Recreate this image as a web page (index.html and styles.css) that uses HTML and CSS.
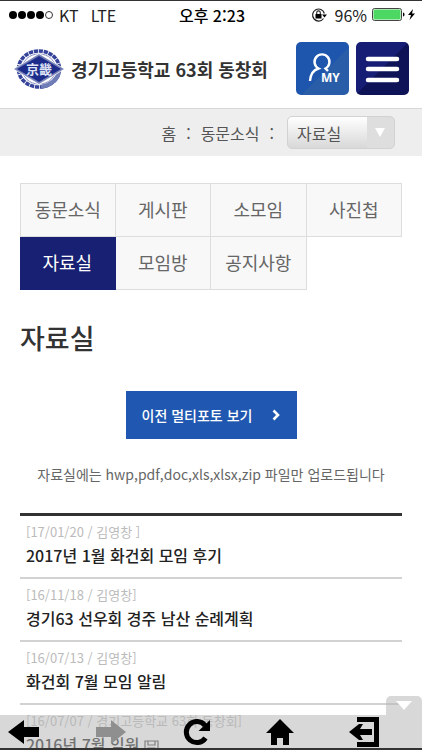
FILE: index.html
```html
<!DOCTYPE html>
<html lang="ko">
<head>
  <meta charset="UTF-8">
  <meta name="viewport" content="width=device-width, initial-scale=1.0">
  <title>경기고등학교 63회 동창회</title>
  <link rel="stylesheet" href="styles.css">
</head>
<body>
  <div class="app">
    <div class="status">
      <div class="status-left">
        <svg width="47" height="10" viewBox="0 0 47 10">
          <circle cx="5" cy="5" r="4"/><circle cx="14" cy="5" r="4"/><circle cx="23" cy="5" r="4"/><circle cx="32" cy="5" r="4"/>
          <circle cx="41" cy="5" r="3.5" fill="none" stroke="#333" stroke-width="1"/>
        </svg>
        <span>KT</span>
        <span class="net">LTE</span>
      </div>
      <div class="status-time">오후 2:23</div>
      <div class="status-right">
        <svg width="16" height="16" viewBox="0 0 16 16">
          <path d="M12.5 11.5A6 6 0 1 1 13.4 6.5" fill="none" stroke="#222" stroke-width="1.2"/>
          <path d="M11 7.5h5l-2.5 3z"/>
          <rect x="4.5" y="7" width="6" height="4.5"/>
          <path d="M5.7 7V5.7a1.8 1.8 0 0 1 3.6 0V7" fill="none" stroke="#222" stroke-width="1.1"/>
        </svg>
        <span>96%</span>
        <svg width="44" height="14" viewBox="0 0 44 14">
          <rect x="0.5" y="0.5" width="29" height="12" rx="2" fill="#fff" stroke="#444"/>
          <rect x="1.5" y="1.5" width="27" height="10" rx="1" fill="#4cd863"/>
          <path d="M31 4.5c2 .4 2 3.6 0 4z"/>
          <path d="M41 1l-5 6h3l-1.5 5 5.5-6.5h-3z"/>
        </svg>
      </div>
    </div>

    <header class="header">
      <a href="#" class="brand">
        <svg class="emblem" width="52" height="42" viewBox="0 0 52 42">
          <ellipse cx="26" cy="21" rx="20.5" ry="18" fill="none" stroke="#35439a" stroke-width="3.6" stroke-dasharray="4.2 0.8"/>
          <ellipse cx="26" cy="21" rx="17" ry="15" fill="#fff" stroke="#8791c0" stroke-width="1"/>
          <path d="M28 39Q43 36 46 24" fill="none" stroke="#6f7cb6" stroke-width="4"/>
          <path d="M0 21L26 5 52 21 26 37z" fill="#fff"/>
          <path d="M1 21L26 6 51 21 26 36z" fill="#7a84b8"/>
          <path d="M4 21L26 8 48 21 26 34z" fill="#1d2c8a"/>
          <text x="26" y="26" text-anchor="middle" class="emblem-text">京畿</text>
        </svg>
        <span>경기고등학교 63회 동창회</span>
      </a>
      <div class="header-buttons">
        <button type="button" class="icon-button my" aria-label="MY">
          <svg width="53" height="53" viewBox="0 0 53 53">
            <path d="M14 39C14.5 32 17.5 28 22.5 26.5A7.5 7.5 0 1 1 29.5 26.5L32 29" fill="none" stroke="#fff" stroke-width="2.4"/>
            <text x="25" y="40" class="my-text">MY</text>
          </svg>
        </button>
        <button type="button" class="icon-button menu" aria-label="메뉴">
          <svg width="53" height="53" viewBox="0 0 53 53">
            <path d="M12 17h29M12 27h29M12 38h29" stroke="#fff" stroke-width="4.5" stroke-linecap="round"/>
          </svg>
        </button>
      </div>
    </header>

    <nav class="breadcrumb">
      <a href="#">홈</a>
      <span>:</span>
      <a href="#">동문소식</a>
      <span>:</span>
      <div class="select-box">
        <select aria-label="게시판 선택">
          <option>자료실</option>
        </select>
        <svg class="select-arrow" width="12" height="9" viewBox="0 0 12 9"><path d="M1 0h10L6 9z" fill="#fff"/></svg>
      </div>
    </nav>

    <main class="content">
      <nav class="tabs">
        <a href="#">동문소식</a>
        <a href="#">게시판</a>
        <a href="#">소모임</a>
        <a href="#">사진첩</a>
        <a href="#" class="active">자료실</a>
        <a href="#">모임방</a>
        <a href="#">공지사항</a>
      </nav>

      <h1>자료실</h1>

      <button type="button" class="old-photos">
        <span>이전 멀티포토 보기</span>
        <svg width="8" height="12" viewBox="0 0 8 12"><path d="M1.5 1.5L6 6 1.5 10.5" fill="none" stroke="#fff" stroke-width="2.6"/></svg>
      </button>
      <p class="notice">자료실에는 hwp,pdf,doc,xls,xlsx,zip 파일만 업로드됩니다</p>

      <ul class="posts">
        <li>
          <span class="meta">[17/01/20 / 김영창 ]</span>
          <a href="#">2017년 1월 화건회 모임 후기</a>
        </li>
        <li>
          <span class="meta">[16/11/18 / 김영창]</span>
          <a href="#">경기63 선우회 경주 남산 순례계획</a>
        </li>
        <li>
          <span class="meta">[16/07/13 / 김영창]</span>
          <a href="#">화건회 7월 모임 알림</a>
        </li>
        <li>
          <span class="meta">[16/07/07 / 경기고등학교 63회 동창회]</span>
          <a href="#">2016년 7월 임원
            <svg width="15" height="13" viewBox="0 0 15 13"><path d="M1 1h13v11H1zM4 1v4h7V1M4 12V8h7v4" fill="none" stroke="#444" stroke-width="1.2"/></svg>
          </a>
        </li>
      </ul>
    </main>
  </div>

  <div class="toolbar">
    <button type="button" class="collapse" aria-label="접기">
      <svg width="16" height="9" viewBox="0 0 16 9"><path d="M0 0h16L8 9z" fill="#fff"/></svg>
    </button>
    <div class="toolbar-row">
      <button type="button" aria-label="뒤로">
        <svg width="32" height="24" viewBox="0 0 32 24"><path d="M0 12L16 0v7h15v10H16v7z"/></svg>
      </button>
      <button type="button" aria-label="앞으로" disabled>
        <svg width="32" height="24" viewBox="0 0 32 24"><path d="M31 12L16 0v7H1v10h15v7z" fill="#8f8f8f"/></svg>
      </button>
      <button type="button" aria-label="새로고침">
        <svg width="30" height="28" viewBox="0 0 30 28">
          <path d="M23.5 20A10.5 10.5 0 1 1 23 7.5" fill="none" stroke="#000" stroke-width="5"/>
          <path d="M28 2v11H16.5z"/>
        </svg>
      </button>
      <button type="button" aria-label="홈">
        <svg width="28" height="26" viewBox="0 0 28 26"><path d="M14 0L0 14h5v12h6v-7h6v7h6V14h5L23.5 9.5z"/></svg>
      </button>
      <button type="button" aria-label="나가기">
        <svg width="30" height="30" viewBox="0 0 30 30">
          <path d="M8 2.5h19.5v25H8" fill="none" stroke="#000" stroke-width="5"/>
          <path d="M0 15L10 7h4l-3 5h12v6H11l3 5h-4z"/>
        </svg>
      </button>
    </div>
  </div>
</body>
</html>
```

FILE: styles.css
```css
* {
  box-sizing: border-box;
}
body {
  margin: 0;
  background: #fff;
  color: #333;
  font-family: "Noto Sans CJK KR", sans-serif;
}
a {
  color: inherit;
  text-decoration: none;
}
button {
  padding: 0;
  border: none;
  background: none;
  font-family: inherit;
  cursor: pointer;
}
svg {
  display: block;
  flex-shrink: 0;
}
.app {
  height: 100vh;
  overflow: hidden;
  border-top: 1px solid #333;
}

/* status bar */
.status {
  display: grid;
  grid-template-columns: 1fr auto 1fr;
  align-items: center;
  height: 28px;
  padding: 0 6px 0 8px;
  color: #222;
  font-size: 16px;
  line-height: 28px;
}
.status-left, .status-right {
  display: flex;
  align-items: center;
  gap: 4px;
}
.net {
  margin-left: 8px;
}
.status-time {
  font-weight: 500;
  color: #000;
}
.status-right {
  justify-content: flex-end;
  gap: 5px;
}
.status-right span {
  margin-left: 3px;
}

/* header */
.header {
  display: flex;
  justify-content: space-between;
  align-items: center;
  height: 80px;
  padding: 0 13px;
  border-bottom: 1px solid #d8d8d8;
}
.brand {
  display: flex;
  align-items: center;
  gap: 6px;
  font-size: 18px;
  font-weight: bold;
  line-height: 24px;
  white-space: nowrap;
}
.emblem-text {
  font-size: 13px;
  font-weight: bold;
  fill: #dfe3f5;
}
.header-buttons {
  display: flex;
  gap: 7px;
}
.icon-button {
  border-radius: 5px;
}
.my {
  background: linear-gradient(135deg, #1e56ae 55%, #2a5da8 55%);
}
.my-text {
  font-family: "Open Sans", sans-serif;
  font-size: 12px;
  font-weight: bold;
  fill: #fff;
}
.menu {
  background: linear-gradient(135deg, #161d74 50%, #0d1356 50%);
}

/* breadcrumb */
.breadcrumb {
  display: flex;
  justify-content: flex-end;
  align-items: center;
  gap: 10px;
  height: 47px;
  padding-right: 27px;
  background: #eee;
  color: #555;
  font-size: 16px;
}
.select-box {
  position: relative;
  margin-left: 3px;
}
.select-box select {
  display: block;
  width: 108px;
  height: 33px;
  padding: 0 9px;
  border: 1px solid #d2d2d2;
  border-radius: 5px;
  background: linear-gradient(to right, transparent 79px, #dedede 79px), linear-gradient(#fff, #d8d8d8);
  color: #555;
  font-family: inherit;
  font-size: 16px;
  appearance: none;
}
.select-arrow {
  position: absolute;
  top: 12px;
  right: 9px;
  pointer-events: none;
}

/* content */
.content {
  padding: 27px 20px 0;
}
.tabs {
  display: grid;
  grid-template-columns: repeat(4, 1fr);
  border-top: 1px solid #ddd;
}
.tabs a {
  height: 53px;
  border-right: 1px solid #ddd;
  border-bottom: 1px solid #ddd;
  background: #f8f8f8;
  color: #666;
  font-size: 18px;
  line-height: 50px;
  text-align: center;
}
.tabs a:first-child {
  border-left: 1px solid #ddd;
}
.tabs a.active {
  border-color: #172072;
  background: #172072;
  color: #fff;
}
h1 {
  margin: 30px 0 35px;
  font-size: 27px;
  font-weight: 500;
  line-height: 36px;
}
.old-photos {
  display: flex;
  justify-content: center;
  align-items: center;
  gap: 20px;
  width: 171px;
  height: 48px;
  margin: 0 auto;
  background: #2057b0;
  color: #fff;
  font-size: 14px;
  font-weight: 500;
}
.notice {
  margin: 24px 0 28px;
  color: #666;
  font-size: 14px;
  line-height: 22px;
  text-align: center;
  white-space: nowrap;
}
.posts {
  margin: 0;
  padding: 0;
  border-top: 3px solid #333;
  list-style: none;
}
.posts li {
  height: 63px;
  padding: 5px 6px 0;
  border-bottom: 2px solid #d2d2d2;
  white-space: nowrap;
}
.meta {
  display: block;
  color: #bbb;
  font-size: 13px;
  line-height: 22px;
}
.posts a {
  display: block;
  color: #222;
  font-size: 16px;
  font-weight: 500;
  line-height: 24px;
}
.posts a svg {
  display: inline-block;
  vertical-align: -2px;
}

/* bottom toolbar, stays over the list */
.toolbar {
  position: fixed;
  right: 0;
  bottom: 0;
  left: 0;
  display: flex;
  flex-direction: column;
  align-items: flex-end;
}
.collapse {
  display: flex;
  justify-content: center;
  align-items: center;
  width: 36px;
  height: 19px;
  border-radius: 5px 5px 0 0;
  background: rgba(183, 183, 183, 0.54);
}
.toolbar-row {
  display: flex;
  justify-content: space-between;
  align-items: center;
  width: 100%;
  height: 35px;
  padding: 0 43px 0 8px;
  border-bottom: 2px solid #333;
  background: rgba(183, 183, 183, 0.54);
}
```
